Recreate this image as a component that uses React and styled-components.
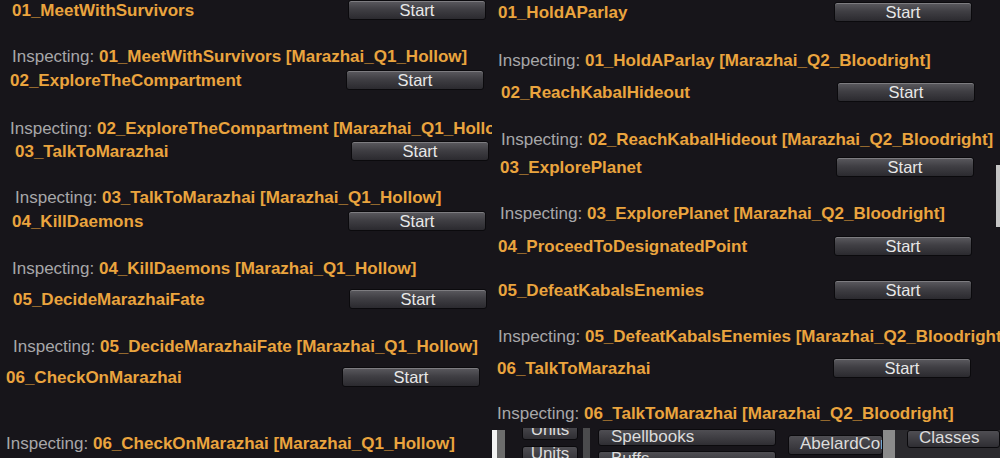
import React from "react";
import styled, { createGlobalStyle } from "styled-components";

const GlobalStyle = createGlobalStyle`
  html, body {
    margin: 0;
    padding: 0;
    background: #17151a;
    overflow: hidden;
  }
  * { box-sizing: border-box; }
`;

const Collage = styled.div`
  display: flex;
  width: 1000px;
  height: 458px;
  background: #17151a;
  font-family: "Liberation Sans", Arial, sans-serif;
  overflow: hidden;
`;

const Panel = styled.div`
  position: relative;
  display: flex;
  flex-direction: column;
  width: ${(p) => p.$width}px;
  flex: ${(p) => (p.$width ? "none" : "1")};
  height: 458px;
  overflow: hidden;
`;

const QuestRow = styled.div`
  display: grid;
  grid-template-columns: 336px 138px;
  align-items: center;
  height: 20px;
  margin-top: ${(p) => p.$gap}px;
  padding-left: ${(p) => p.$indent}px;
`;

const QuestName = styled.span`
  padding-top: 2px;
  color: #eaa43e;
  font-weight: bold;
  font-size: 17px;
  line-height: 18px;
  white-space: nowrap;
`;

const StartButton = styled.button`
  height: 20px;
  padding: 0;
  border: 1px solid #0b0a0d;
  border-radius: 3px;
  background: linear-gradient(#5b5a5f 0%, #403f44 45%, #2b2a2f 100%);
  box-shadow: inset 0 1px 0 rgba(255, 255, 255, 0.22);
  color: #e8e8e8;
  font-family: "Liberation Sans", Arial, sans-serif;
  font-size: 16.5px;
  line-height: 18px;
  text-align: center;
`;

const InspectLine = styled.div`
  height: 20px;
  line-height: 22px;
  margin-top: ${(p) => p.$gap}px;
  padding-left: ${(p) => p.$indent}px;
  font-size: 17px;
  white-space: nowrap;
  color: #a7a7a9;
`;

const InspectTarget = styled.b`
  color: #eaa43e;
`;

const ScrollThumb = styled.div`
  position: absolute;
  right: 0;
  top: 165px;
  width: 4px;
  height: 62px;
  background: #c6c6c6;
`;

const BottomBar = styled.div`
  display: flex;
  height: 30px;
  margin-top: 5px;
  overflow: hidden;
`;

const WhiteEdge = styled.div`
  width: 5px;
  margin-top: 2px;
  background: #f3f3f3;
`;

const FrameBar = styled.div`
  width: 8px;
  margin-top: 2px;
  background: #6c6c6c;
`;

const TabColumn = styled.div`
  display: flex;
  flex-direction: column;
  gap: ${(p) => p.$gap}px;
  width: ${(p) => p.$width}px;
  margin-left: ${(p) => p.$left}px;
  margin-top: ${(p) => p.$top}px;
`;

const Divider = styled.div`
  width: 7px;
  margin-left: 5px;
  background: #4b4b4d;
`;

const ToolButton = styled.div`
  height: ${(p) => p.$height}px;
  flex: none;
  padding-left: ${(p) => p.$pad}px;
  border: 1px solid #0b0a0d;
  border-radius: 3px;
  background: linear-gradient(#4f4e53, #2f2e33);
  color: #dcdcdc;
  font-size: 17px;
  line-height: ${(p) => p.$height - 4}px;
  text-align: ${(p) => (p.$pad ? "left" : "center")};
  white-space: nowrap;
  overflow: hidden;
`;

const AbelardSlot = styled.div`
  width: 95px;
  margin-left: 12px;
  margin-top: 7px;
`;

const GreyPanel = styled.div`
  flex: 1;
  display: flex;
  margin-top: 2px;
  padding-left: 12px;
  background: #8b8b8b;
`;

const GreyInset = styled.div`
  flex: 1;
  padding-left: 12px;
  background: #2b2a2e;
`;

const leftQuests = [
  { name: "01_MeetWithSurvivors", indent: 12, gap: 0, inspect: 26 },
  { name: "02_ExploreTheCompartment", indent: 10, gap: 4, inspect: 28 },
  { name: "03_TalkToMarazhai", indent: 15, gap: 3, inspect: 26 },
  { name: "04_KillDaemons", indent: 12, gap: 4, inspect: 27 },
  { name: "05_DecideMarazhaiFate", indent: 13, gap: 11, inspect: 27 },
  { name: "06_CheckOnMarazhai", indent: 6, gap: 11, inspect: 46 },
];

const rightQuests = [
  { name: "01_HoldAParlay", indent: 6, gap: 2, inspect: 28 },
  { name: "02_ReachKabalHideout", indent: 9, gap: 12, inspect: 27 },
  { name: "03_ExplorePlanet", indent: 8, gap: 8, inspect: 26 },
  { name: "04_ProceedToDesignatedPoint", indent: 6, gap: 13, inspect: null },
  { name: "05_DefeatKabalsEnemies", indent: 6, gap: 24, inspect: 26 },
  { name: "06_TalkToMarazhai", indent: 5, gap: 12, inspect: 25 },
];

function QuestList({ quests, tag }) {
  return quests.map((q) => (
    <React.Fragment key={q.name}>
      <QuestRow $gap={q.gap} $indent={q.indent}>
        <QuestName>{q.name}</QuestName>
        <StartButton>Start</StartButton>
      </QuestRow>
      {q.inspect !== null && (
        <InspectLine $gap={q.inspect} $indent={q.indent}>
          Inspecting: <InspectTarget>{q.name} [{tag}]</InspectTarget>
        </InspectLine>
      )}
    </React.Fragment>
  ));
}

export default function App() {
  return (
    <>
      <GlobalStyle />
      <Collage>
        <Panel $width={492}>
          <QuestList quests={leftQuests} tag="Marazhai_Q1_Hollow" />
        </Panel>
        <Panel>
          <QuestList quests={rightQuests} tag="Marazhai_Q2_Bloodright" />
          <ScrollThumb />
          <BottomBar>
            <WhiteEdge />
            <FrameBar />
            <TabColumn $gap={6} $width={56} $left={17} $top={-6}>
              <ToolButton $height={18}>Units</ToolButton>
              <ToolButton $height={18}>Units</ToolButton>
            </TabColumn>
            <Divider />
            <TabColumn $gap={5} $width={178} $left={8} $top={1}>
              <ToolButton $height={17} $pad={12}>Spellbooks</ToolButton>
              <ToolButton $height={17} $pad={12}>Buffs</ToolButton>
            </TabColumn>
            <AbelardSlot>
              <ToolButton $height={20} $pad={11}>AbelardCompanion</ToolButton>
            </AbelardSlot>
            <GreyPanel>
              <GreyInset>
                <ToolButton $height={18} $pad={11}>Classes</ToolButton>
              </GreyInset>
            </GreyPanel>
          </BottomBar>
        </Panel>
      </Collage>
    </>
  );
}
